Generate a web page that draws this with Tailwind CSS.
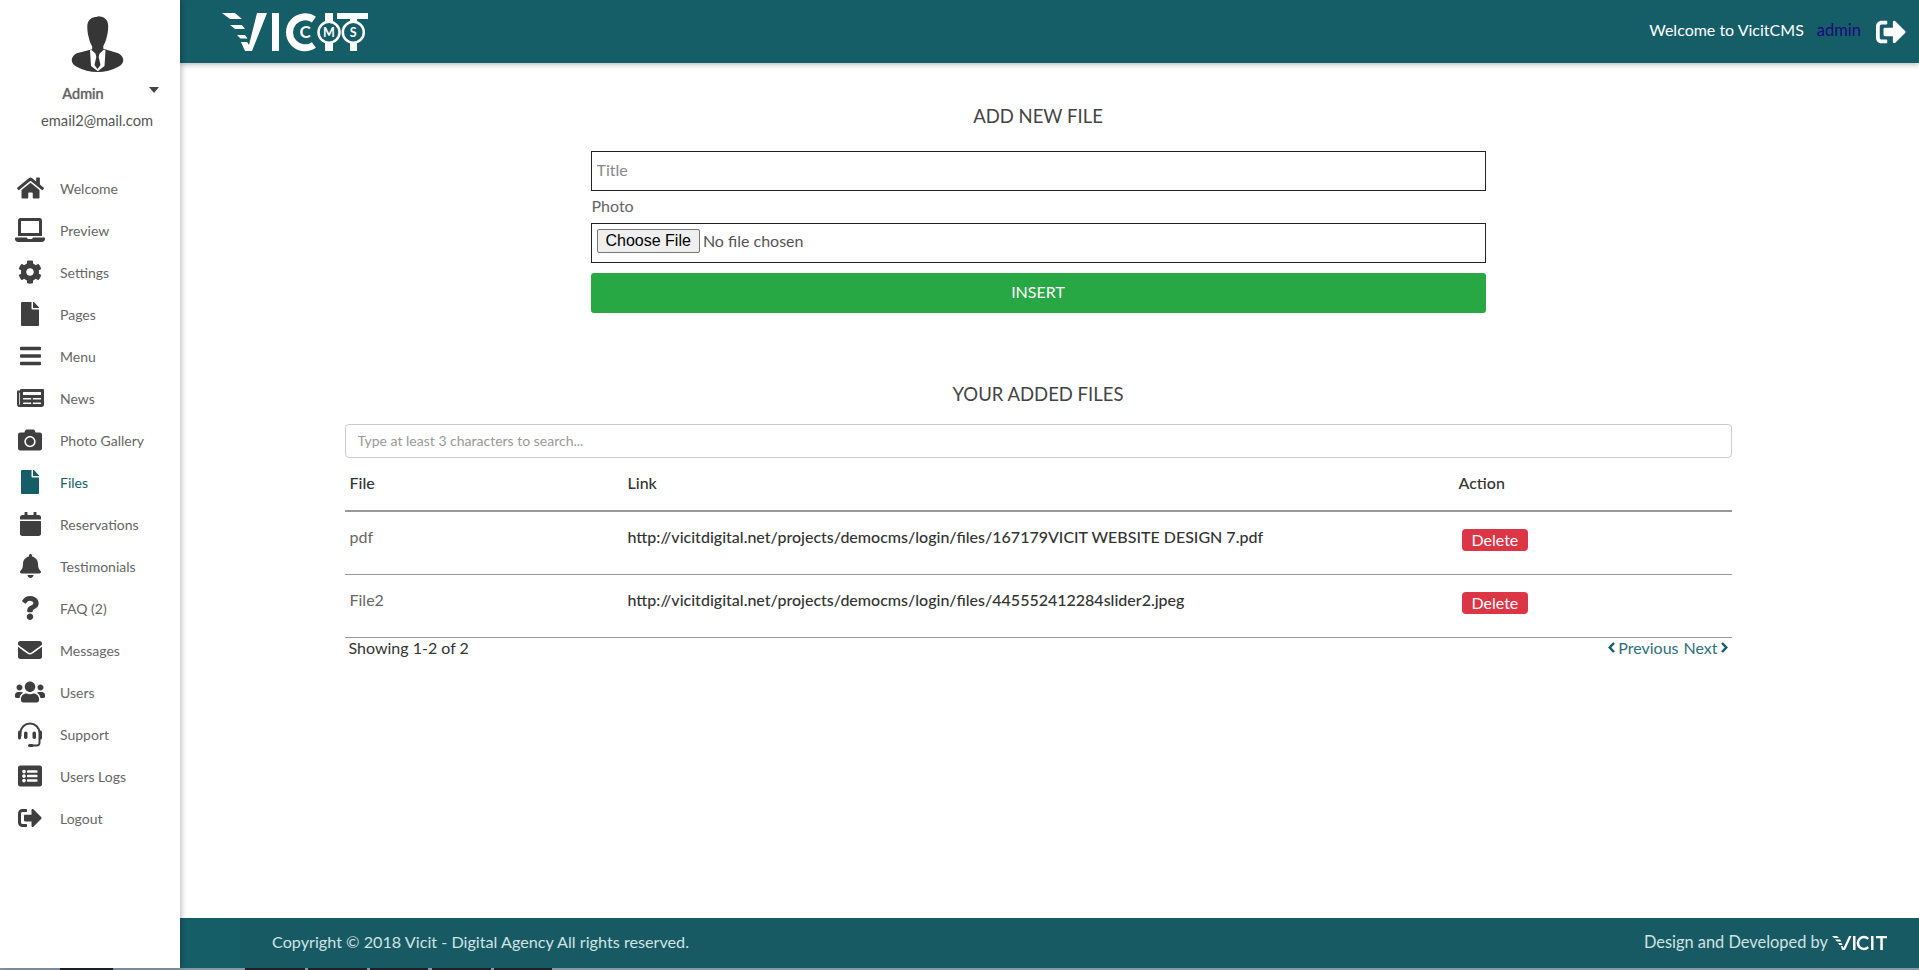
<!DOCTYPE html>
<html lang="en">
<head>
    <meta charset="UTF-8">
    <title>VicitCMS - Files</title>
    <script src="https://cdn.jsdelivr.net/npm/@tailwindcss/browser@4"></script>
</head>
<body class="bg-white font-['Lato','Open_Sans',sans-serif] text-[#444] overflow-hidden">
<div class="flex h-[968px]">
    <!-- sidebar -->
    <aside class="w-[180px] shrink-0 bg-white shadow-[2px_0_5px_rgba(0,0,0,0.22)] z-10 flex flex-col">
        <div class="pt-[16px] pl-[72px]">
            <svg class="w-[52px] h-[56px] overflow-visible" viewBox="0 0 52 56">
                <path fill="#363636" d="M25.500.7c-6.500 0-10.200 3.800-10.200 9.800 0 4.500.6 8 1.500 11 .6 3.500 2 6.500 3.400 9.100v2.700L4.700 37.300C2 38.500 0 41 -.3 44c0 3 2 5.200 5 6.700 6 3.500 13.500 5.300 20.800 5.300s14.800-1.800 20.800-5.300c3-1.500 5-3.700 5-6.700-.3-3-2.300-5.500-5-6.700l-15-4.500v-2.700c1.400-2.600 2.800-5.600 3.400-9.100.9-3 1.500-6.500 1.500-11 0-6-3.700-9.800-10.200-9.800z"/>
                <path fill="#fff" d="M19 33.500l6.500 6 6.500-6 1.500 1-1 15.500-6.500 5-.5 0-6.500-5-1-15.500z"/>
                <path fill="#363636" d="M23.500 37.500h4l-.8 3.500 1.800 8-3 4-3-4 1.800-8z"/>
            </svg>
        </div>
        <div class="relative mt-[9px] h-[18px] text-center">
            <span class="text-[14.500px] text-[#666] leading-[18px] mr-[14px] [text-shadow:0_0_1px_#666]">Admin</span>
            <svg class="absolute left-[149px] top-[6px] w-[10px] h-[6px]" viewBox="0 0 10 6"><path fill="#444" d="M0 0h10L5 6z"/></svg>
        </div>
        <div class="mt-[12px] pl-[41px] text-[14.700px] leading-[18px] text-[#555]">email2@mail.com</div>

        <nav class="mt-[38px] flex flex-col text-[14px] text-[#666]">
            <a class="h-[42px] flex items-center">
                <span class="w-[60px] flex justify-center"><svg class="h-[24px] w-[27px] fill-[#3f3f3f]" viewBox="0 0 576 512"><path d="M280.37 148.26L96 300.11V464a16 16 0 0 0 16 16l112.06-.29a16 16 0 0 0 15.92-16V368a16 16 0 0 1 16-16h64a16 16 0 0 1 16 16v95.64a16 16 0 0 0 16 16.05L464 480a16 16 0 0 0 16-16V300L295.67 148.26a12.19 12.19 0 0 0-15.3 0zM571.6 251.47L488 182.56V44.05a12 12 0 0 0-12-12h-56a12 12 0 0 0-12 12v72.61L318.47 43a48 48 0 0 0-61 0L4.34 251.47a12 12 0 0 0-1.6 16.9l25.5 31A12 12 0 0 0 45.15 301l235.22-193.74a12.19 12.19 0 0 1 15.3 0L530.9 301a12 12 0 0 0 16.9-1.6l25.5-31a12 12 0 0 0-1.7-16.93z"/></svg></span>
                <span>Welcome</span>
            </a>
            <a class="h-[42px] flex items-center">
                <span class="w-[60px] flex justify-center"><svg class="h-[24px] w-[30px] fill-[#3f3f3f]" viewBox="0 0 640 512"><path d="M624 416H381.54c-.74 19.81-14.71 32-32.74 32H288c-18.69 0-33.02-17.47-32.77-32H16c-8.8 0-16 7.2-16 16v16c0 35.2 28.8 64 64 64h512c35.2 0 64-28.8 64-64v-16c0-8.800-7.2-16-16-16zM576 48c0-26.400-21.600-48-48-48H112C85.600 0 64 21.600 64 48v336h512V48zm-64 272H128V64h384v256z"/></svg></span>
                <span>Preview</span>
            </a>
            <a class="h-[42px] flex items-center">
                <span class="w-[60px] flex justify-center"><svg class="h-[24px] w-[24px] fill-[#3f3f3f]" viewBox="0 0 512 512"><path d="M487.4 315.7l-42.6-24.6c4.3-23.2 4.3-47 0-70.2l42.6-24.6c4.9-2.8 7.1-8.6 5.5-14-11.1-35.6-30-67.8-54.7-94.6-3.8-4.1-10-5.1-14.8-2.3L380.8 110c-17.9-15.4-38.5-27.3-60.8-35.1V25.8c0-5.6-3.9-10.5-9.4-11.7-36.7-8.2-74.3-7.8-109.2 0-5.5 1.2-9.4 6.1-9.4 11.7V75c-22.2 7.9-42.8 19.8-60.8 35.1L88.7 85.5c-4.9-2.8-11-1.9-14.8 2.3-24.7 26.7-43.6 58.9-54.7 94.6-1.7 5.4.6 11.2 5.5 14L67.3 221c-4.3 23.2-4.3 47 0 70.2l-42.6 24.6c-4.9 2.8-7.1 8.6-5.5 14 11.1 35.6 30 67.8 54.7 94.6 3.8 4.1 10 5.1 14.8 2.3l42.6-24.6c17.9 15.4 38.5 27.3 60.8 35.1v49.2c0 5.6 3.9 10.5 9.4 11.7 36.7 8.2 74.3 7.8 109.2 0 5.5-1.2 9.4-6.1 9.4-11.7v-49.2c22.2-7.9 42.8-19.8 60.8-35.1l42.6 24.6c4.9 2.8 11 1.9 14.8-2.3 24.7-26.7 43.6-58.9 54.7-94.6 1.5-5.5-.7-11.3-5.6-14.1zM256 336c-44.1 0-80-35.9-80-80s35.9-80 80-80 80 35.9 80 80-35.9 80-80 80z"/></svg></span>
                <span>Settings</span>
            </a>
            <a class="h-[42px] flex items-center">
                <span class="w-[60px] flex justify-center"><svg class="h-[24px] w-[18px] fill-[#3f3f3f]" viewBox="0 0 384 512"><path d="M224 136V0H24C10.700 0 0 10.700 0 24v464c0 13.300 10.700 24 24 24h336c13.300 0 24-10.700 24-24V160H248c-13.200 0-24-10.800-24-24zm160-14.100v6.100H256V0h6.100c6.400 0 12.500 2.500 17 7l97.900 98c4.500 4.500 7 10.600 7 16.900z"/></svg></span>
                <span>Pages</span>
            </a>
            <a class="h-[42px] flex items-center">
                <span class="w-[60px] flex justify-center"><svg class="h-[24px] w-[21px] fill-[#3f3f3f]" viewBox="0 0 448 512"><path d="M16 132h416c8.837 0 16-7.163 16-16V76c0-8.837-7.163-16-16-16H16C7.163 60 0 67.163 0 76v40c0 8.837 7.163 16 16 16zm0 160h416c8.837 0 16-7.163 16-16v-40c0-8.837-7.163-16-16-16H16c-8.837 0-16 7.163-16 16v40c0 8.837 7.163 16 16 16zm0 160h416c8.837 0 16-7.163 16-16v-40c0-8.837-7.163-16-16-16H16c-8.837 0-16 7.163-16 16v40c0 8.837 7.163 16 16 16z"/></svg></span>
                <span>Menu</span>
            </a>
            <a class="h-[42px] flex items-center">
                <span class="w-[60px] flex justify-center"><svg class="h-[24px] w-[27px] fill-[#3f3f3f]" viewBox="0 0 576 512"><path d="M552 64H88c-13.255 0-24 10.745-24 24v8H24c-13.255 0-24 10.745-24 24v272c0 30.928 25.072 56 56 56h472c26.510 0 48-21.490 48-48V88c0-13.255-10.745-24-24-24zM56 400a8 8 0 0 1-8-8V144h16v248a8 8 0 0 1-8 8zm236-16H140c-6.627 0-12-5.373-12-12v-8c0-6.627 5.373-12 12-12h152c6.627 0 12 5.373 12 12v8c0 6.627-5.373 12-12 12zm208 0H348c-6.627 0-12-5.373-12-12v-8c0-6.627 5.373-12 12-12h152c6.627 0 12 5.373 12 12v8c0 6.627-5.373 12-12 12zm-208-96H140c-6.627 0-12-5.373-12-12v-8c0-6.627 5.373-12 12-12h152c6.627 0 12 5.373 12 12v8c0 6.627-5.373 12-12 12zm208 0H348c-6.627 0-12-5.373-12-12v-8c0-6.627 5.373-12 12-12h152c6.627 0 12 5.373 12 12v8c0 6.627-5.373 12-12 12zm0-96H140c-6.627 0-12-5.373-12-12v-40c0-6.627 5.373-12 12-12h360c6.627 0 12 5.373 12 12v40c0 6.627-5.373 12-12 12z"/></svg></span>
                <span>News</span>
            </a>
            <a class="h-[42px] flex items-center">
                <span class="w-[60px] flex justify-center"><svg class="h-[24px] w-[24px] fill-[#3f3f3f]" viewBox="0 0 512 512"><path d="M512 144v288c0 26.500-21.500 48-48 48H48c-26.500 0-48-21.500-48-48V144c0-26.500 21.500-48 48-48h88l12.300-32.900c7-18.700 24.900-31.100 44.900-31.100h125.500c20 0 37.900 12.400 44.900 31.100L376 96h88c26.500 0 48 21.500 48 48zM376 288c0-66.200-53.800-120-120-120s-120 53.800-120 120 53.800 120 120 120 120-53.800 120-120zm-32 0c0 48.500-39.500 88-88 88s-88-39.500-88-88 39.500-88 88-88 88 39.500 88 88z"/></svg></span>
                <span>Photo Gallery</span>
            </a>
            <a class="h-[42px] flex items-center text-[#155d67]">
                <span class="w-[60px] flex justify-center"><svg class="h-[24px] w-[18px] fill-[#155d67]" viewBox="0 0 384 512"><path d="M224 136V0H24C10.700 0 0 10.700 0 24v464c0 13.300 10.700 24 24 24h336c13.300 0 24-10.700 24-24V160H248c-13.200 0-24-10.800-24-24zm160-14.100v6.100H256V0h6.100c6.400 0 12.500 2.500 17 7l97.900 98c4.500 4.500 7 10.600 7 16.900z"/></svg></span>
                <span>Files</span>
            </a>
            <a class="h-[42px] flex items-center">
                <span class="w-[60px] flex justify-center"><svg class="h-[24px] w-[21px] fill-[#3f3f3f]" viewBox="0 0 448 512"><path d="M12 192h424c6.600 0 12 5.400 12 12v260c0 26.500-21.500 48-48 48H48c-26.500 0-48-21.500-48-48V204c0-6.600 5.400-12 12-12zm436-44v-36c0-26.500-21.500-48-48-48h-48V12c0-6.600-5.400-12-12-12h-40c-6.600 0-12 5.400-12 12v52H160V12c0-6.600-5.400-12-12-12h-40c-6.600 0-12 5.400-12 12v52H48C21.500 64 0 85.500 0 112v36c0 6.600 5.400 12 12 12h424c6.600 0 12-5.400 12-12z"/></svg></span>
                <span>Reservations</span>
            </a>
            <a class="h-[42px] flex items-center">
                <span class="w-[60px] flex justify-center"><svg class="h-[24px] w-[21px] fill-[#3f3f3f]" viewBox="0 0 448 512"><path d="M224 512c35.320 0 63.970-28.650 63.970-63.970H160.030C160.030 483.350 188.680 512 224 512zm215.390-149.710c-19.320-20.760-55.470-51.990-55.470-154.290 0-77.700-54.480-139.900-127.940-155.160V32c0-17.670-14.320-32-31.980-32s-31.980 14.330-31.980 32v20.840C118.560 68.100 64.080 130.300 64.080 208c0 102.300-36.150 133.530-55.470 154.290-6 6.450-8.660 14.160-8.610 21.710.11 16.400 12.980 32 32.100 32h383.800c19.120 0 32-15.600 32.100-32 .05-7.550-2.610-15.270-8.610-21.710z"/></svg></span>
                <span>Testimonials</span>
            </a>
            <a class="h-[42px] flex items-center">
                <span class="w-[60px] flex justify-center"><svg class="h-[24px] w-[18px] fill-[#3f3f3f]" viewBox="0 0 384 512"><path d="M202.021 0C122.202 0 70.503 32.703 29.914 91.026c-7.363 10.580-5.093 25.086 5.178 32.874l43.138 32.709c10.373 7.865 25.132 6.026 33.253-4.148 25.049-31.381 43.630-49.449 82.757-49.449 30.764 0 68.816 19.799 68.816 49.631 0 22.552-18.617 34.134-48.993 51.164-35.423 19.860-82.299 44.576-82.299 106.405V320c0 13.255 10.745 24 24 24h72.471c13.255 0 24-10.745 24-24v-5.773c0-42.860 125.268-44.645 125.268-160.627C377.504 66.256 286.902 0 202.021 0zM192 373.459c-38.196 0-69.271 31.075-69.271 69.271 0 38.195 31.075 69.270 69.271 69.270s69.271-31.075 69.271-69.271-31.075-69.270-69.271-69.270z"/></svg></span>
                <span>FAQ (2)</span>
            </a>
            <a class="h-[42px] flex items-center">
                <span class="w-[60px] flex justify-center"><svg class="h-[24px] w-[24px] fill-[#3f3f3f]" viewBox="0 0 512 512"><path d="M502.300 190.800c3.900-3.100 9.700-.2 9.700 4.700V400c0 26.500-21.500 48-48 48H48c-26.500 0-48-21.500-48-48V195.600c0-5 5.700-7.800 9.700-4.700 22.400 17.400 52.100 39.500 154.100 113.600 21.100 15.400 56.700 47.800 92.200 47.600 35.700.3 72-32.800 92.300-47.600 102-74.100 131.600-96.300 154-113.700zM256 320c23.200.4 56.600-29.200 73.400-41.400 132.700-96.300 142.800-104.700 173.400-128.700 5.800-4.500 9.200-11.500 9.200-18.900v-19c0-26.500-21.500-48-48-48H48C21.500 64 0 85.500 0 112v19c0 7.400 3.400 14.300 9.200 18.900 30.600 23.900 40.700 32.400 173.400 128.700 16.800 12.200 50.200 41.800 73.400 41.400z"/></svg></span>
                <span>Messages</span>
            </a>
            <a class="h-[42px] flex items-center">
                <span class="w-[60px] flex justify-center"><svg class="h-[24px] w-[30px] fill-[#3f3f3f]" viewBox="0 0 640 512"><path d="M96 224c35.300 0 64-28.700 64-64s-28.700-64-64-64-64 28.700-64 64 28.700 64 64 64zm448 0c35.300 0 64-28.700 64-64s-28.700-64-64-64-64 28.700-64 64 28.700 64 64 64zm32 32h-64c-17.600 0-33.500 7.100-45.100 18.600 40.300 22.100 68.900 62 75.100 109.400h66c17.700 0 32-14.300 32-32v-32c0-35.300-28.700-64-64-64zm-256 0c61.900 0 112-50.100 112-112S381.900 32 320 32 208 82.100 208 144s50.100 112 112 112zm76.800 32h-8.300c-20.800 10-43.900 16-68.500 16s-47.600-6-68.500-16h-8.300C179.600 288 128 339.600 128 403.200V432c0 26.500 21.500 48 48 48h288c26.500 0 48-21.500 48-48v-28.800c0-63.600-51.600-115.200-115.200-115.200zm-223.700-13.400C161.500 263.100 145.600 256 128 256H64c-35.300 0-64 28.700-64 64v32c0 17.700 14.300 32 32 32h65.900c6.300-47.400 34.900-87.300 75.200-109.400z"/></svg></span>
                <span>Users</span>
            </a>
            <a class="h-[42px] flex items-center">
                <span class="w-[60px] flex justify-center"><svg class="h-[25px] w-[24px]" viewBox="0 0 24 25"><path fill="none" stroke="#3f3f3f" stroke-width="2" d="M2.500 14.500V11a9.500 9.500 0 0 1 19 0v10a2.500 2.500 0 0 1-2.500 2.500h-5"/><rect x="0" y="8.500" width="3" height="9" rx="1.500" fill="#3f3f3f"/><rect x="21" y="8.500" width="3" height="9" rx="1.500" fill="#3f3f3f"/><rect x="6" y="9.500" width="3.500" height="7.500" rx="1.700" fill="#3f3f3f"/><rect x="14.500" y="9.500" width="3.500" height="7.500" rx="1.700" fill="#3f3f3f"/><rect x="10" y="22" width="5.500" height="3" rx="1.500" fill="#3f3f3f"/></svg></span>
                <span>Support</span>
            </a>
            <a class="h-[42px] flex items-center">
                <span class="w-[60px] flex justify-center"><svg class="h-[24px] w-[24px] fill-[#3f3f3f]" viewBox="0 0 512 512"><path d="M464 480H48c-26.510 0-48-21.490-48-48V80c0-26.510 21.490-48 48-48h416c26.510 0 48 21.490 48 48v352c0 26.510-21.490 48-48 48zM128 120c-22.091 0-40 17.909-40 40s17.909 40 40 40 40-17.909 40-40-17.909-40-40-40zm0 96c-22.091 0-40 17.909-40 40s17.909 40 40 40 40-17.909 40-40-17.909-40-40-40zm0 96c-22.091 0-40 17.909-40 40s17.909 40 40 40 40-17.909 40-40-17.909-40-40-40zm288-136v-32c0-6.627-5.373-12-12-12H204c-6.627 0-12 5.373-12 12v32c0 6.627 5.373 12 12 12h200c6.627 0 12-5.373 12-12zm0 96v-32c0-6.627-5.373-12-12-12H204c-6.627 0-12 5.373-12 12v32c0 6.627 5.373 12 12 12h200c6.627 0 12-5.373 12-12zm0 96v-32c0-6.627-5.373-12-12-12H204c-6.627 0-12 5.373-12 12v32c0 6.627 5.373 12 12 12h200c6.627 0 12-5.373 12-12z"/></svg></span>
                <span>Users Logs</span>
            </a>
            <a class="h-[42px] flex items-center">
                <span class="w-[60px] flex justify-center"><svg class="h-[24px] w-[24px] fill-[#3f3f3f]" viewBox="0 0 512 512"><path d="M497 273L329 441c-15 15-41 4.500-41-17v-96H152c-13.300 0-24-10.700-24-24v-96c0-13.300 10.700-24 24-24h136V88c0-21.400 25.900-32 41-17l168 168c9.300 9.400 9.300 24.600 0 34zM192 436v-40c0-6.600-5.400-12-12-12H96c-17.700 0-32-14.300-32-32V160c0-17.700 14.300-32 32-32h84c6.600 0 12-5.400 12-12V76c0-6.600-5.400-12-12-12H96c-53 0-96 43-96 96v192c0 53 43 96 96 96h84c6.600 0 12-5.400 12-12z"/></svg></span>
                <span>Logout</span>
            </a>
        </nav>
    </aside>

    <div class="flex-1 flex flex-col min-w-0">
        <!-- header -->
        <header class="h-[63px] shrink-0 bg-[#155d67] shadow-[0_2px_5px_rgba(0,0,0,0.25)] z-[5] flex items-center justify-between pl-[42px] pr-[12px] text-white">
            <svg class="w-[148px] h-[40px]" viewBox="0 0 148 40">
                <g fill="#fff">
                    <path d="M0 1h13l7 6H8zM8 13h12l3 4H13zM15 23h8l2.500 3.500h-7zM35 1h10L30 39h-7l-4-9h6l2 3z"/>
                    <rect x="50" y="1" width="7" height="38"/>
                    <rect x="103" y="1" width="8" height="38"/>
                    <rect x="115" y="1" width="31" height="6"/>
                    <rect x="128" y="1" width="7" height="38"/>
                </g>
                <path fill="none" stroke="#fff" stroke-width="7" d="M91.900 7.600A15.500 15.500 0 1 0 91.900 33"/>
                <g fill="#155d67" stroke="#fff" stroke-width="2.500">
                    <circle cx="107" cy="20.300" r="10.500"/>
                    <circle cx="131.300" cy="20.300" r="10.500"/>
                </g>
                <g fill="#fff" font-family="Lato, sans-serif" font-weight="700" text-anchor="middle">
                    <text x="83" y="26" font-size="17">C</text>
                    <text x="107" y="25" font-size="12.500">M</text>
                    <text x="131.300" y="25" font-size="12.500">S</text>
                </g>
            </svg>
            <div class="flex items-center text-[16px] pb-[3px]">
                <span>Welcome to VicitCMS</span>
                <span class="ml-[13px] text-[16.500px] text-[#1a0b7e]">admin</span>
                <svg class="ml-[14px] mt-[3px] w-[32px] h-[30px] fill-white" viewBox="0 0 512 512"><path d="M497 273L329 441c-15 15-41 4.500-41-17v-96H152c-13.300 0-24-10.700-24-24v-96c0-13.300 10.700-24 24-24h136V88c0-21.400 25.900-32 41-17l168 168c9.300 9.400 9.300 24.600 0 34zM192 436v-40c0-6.600-5.400-12-12-12H96c-17.700 0-32-14.300-32-32V160c0-17.700 14.300-32 32-32h84c6.600 0 12-5.400 12-12V76c0-6.600-5.400-12-12-12H96c-53 0-96 43-96 96v192c0 53 43 96 96 96h84c6.600 0 12-5.400 12-12z"/></svg>
            </div>
        </header>

        <!-- content -->
        <main class="flex-1 flex flex-col items-center pr-[23px]">
            <h2 class="mt-[41px] text-[18.500px] leading-[24px] text-[#444] text-center">ADD NEW FILE</h2>
            <form class="mt-[23px] w-[895px] flex flex-col">
                <input type="text" placeholder="Title" class="h-[40px] border border-[#222] px-[5px] pb-[3px] text-[16px] placeholder:text-[#888] outline-none">
                <label class="mt-[1px] mb-[4px] h-[27px] pl-[1px] text-[16px] leading-[27px] text-[#666]">Photo</label>
                <div class="h-[40px] border border-[#222] flex items-center px-[5px] pb-[4px]">
                    <span class="h-[24px] px-[8px] bg-[#efefef] border border-[#767676] rounded-[2px] font-['Liberation_Sans',sans-serif] text-[16px] leading-[22px] text-black">Choose File</span>
                    <span class="ml-[3px] text-[16px] text-[#555]">No file chosen</span>
                </div>
                <button type="button" class="mt-[10px] h-[40px] pb-[2px] bg-[#28a745] rounded-[3px] text-white text-[16px]">INSERT</button>
            </form>

            <h2 class="mt-[68px] text-[18.500px] leading-[26px] text-[#444] text-center">YOUR ADDED FILES</h2>
            <div class="mt-[17px] w-[1387px]">
                <input type="text" placeholder="Type at least 3 characters to search..." class="block w-full h-[34px] border border-[#ccc] rounded-[4px] px-[12px] pb-[2px] text-[14px] placeholder:text-[#999] outline-none">
                <table class="w-full table-fixed border-collapse text-[16px]">
                    <thead>
                        <tr class="h-[53px] border-b-2 border-[#999] text-left">
                            <th class="w-[278px] pl-[5px] pb-[3px] font-medium text-[#333]">File</th>
                            <th class="pl-[5px] pb-[3px] font-medium text-[#333]">Link</th>
                            <th class="w-[278px] pl-[5px] pb-[3px] font-medium text-[#333]">Action</th>
                        </tr>
                    </thead>
                    <tbody>
                        <tr class="h-[63px] border-b border-[#999]">
                            <td class="pl-[5px] pb-[12px] text-[#666]">pdf</td>
                            <td class="pl-[5px] pb-[12px] font-medium text-[#333]">http://vicitdigital.net/projects/democms/login/files/167179VICIT WEBSITE DESIGN 7.pdf</td>
                            <td class="pl-[8px] pb-[5px]"><span class="inline-block h-[22px] px-[10px] bg-[#dc3545] rounded-[4px] text-white text-[16px] leading-[22px]">Delete</span></td>
                        </tr>
                        <tr class="h-[63px] border-b border-[#999]">
                            <td class="pl-[5px] pb-[12px] text-[#666]">File2</td>
                            <td class="pl-[5px] pb-[12px] font-medium text-[#333]">http://vicitdigital.net/projects/democms/login/files/445552412284slider2.jpeg</td>
                            <td class="pl-[8px] pb-[5px]"><span class="inline-block h-[22px] px-[10px] bg-[#dc3545] rounded-[4px] text-white text-[16px] leading-[22px]">Delete</span></td>
                        </tr>
                    </tbody>
                </table>
                <div class="flex justify-between pl-[4px] pr-[4px] text-[16px] leading-[20px]">
                    <span class="text-[#333]">Showing 1-2 of 2</span>
                    <span class="flex items-center gap-[3px] text-[#2f7079]">
                        <svg class="w-[7px] h-[11px]" viewBox="0 0 7 11"><path fill="none" stroke="#155d67" stroke-width="2.500" d="M6 1L1.700 5.500 6 10"/></svg>
                        <span class="flex gap-[5px]"><span>Previous</span><span>Next</span></span>
                        <svg class="w-[7px] h-[11px]" viewBox="0 0 7 11"><path fill="none" stroke="#155d67" stroke-width="2.500" d="M1 1l4.300 4.500L1 10"/></svg>
                    </span>
                </div>
            </div>
        </main>

        <!-- footer -->
        <footer class="h-[50px] shrink-0 bg-[#185a63] flex items-center justify-between text-[#cfe3e3]">
            <div class="h-full w-[60px] bg-[#155d67]"></div>
            <span class="mr-auto ml-[32px] pb-[2px] text-[16.200px]">Copyright © 2018 Vicit - Digital Agency All rights reserved.</span>
            <span class="pb-[2px] text-[16.400px]">Design and Developed by</span>
            <svg class="ml-[4px] mr-[31px] w-[56px] h-[16px]" viewBox="0 0 56 16">
                <g fill="#fff">
                    <path d="M0 1h5l2 2H2zM3 4.500h5l1.500 2H5zM6 8h3.500l1 2H7.500zM9 11h1.500l1 2L17 1h2.500l-6.500 14h-3z"/>
                    <rect x="21" y="1" width="2.500" height="14"/>
                    <path d="M37 3a7.200 7.200 0 1 0 0 10l-1.500-1.700a4.800 4.800 0 1 1 0-6.600z"/>
                    <rect x="39" y="1" width="2.500" height="14"/>
                    <rect x="44" y="1" width="11" height="2.300"/>
                    <rect x="48.300" y="1" width="2.500" height="14"/>
                </g>
            </svg>
        </footer>
    </div>
</div>
<!-- sliver of the window below the page -->
<div class="h-[2px] bg-[#8697a5] flex">
    <div class="ml-[60px] w-[53px] bg-[#1c2228]"></div>
    <div class="ml-[132px] w-[60px] bg-[#1c2228]"></div>
    <div class="ml-[3px] w-[59px] bg-[#1c2228]"></div>
    <div class="ml-[3px] w-[58px] bg-[#1c2228]"></div>
    <div class="ml-[4px] w-[59px] bg-[#1c2228]"></div>
    <div class="ml-[3px] w-[58px] bg-[#1c2228]"></div>
</div>
</body>
</html>
